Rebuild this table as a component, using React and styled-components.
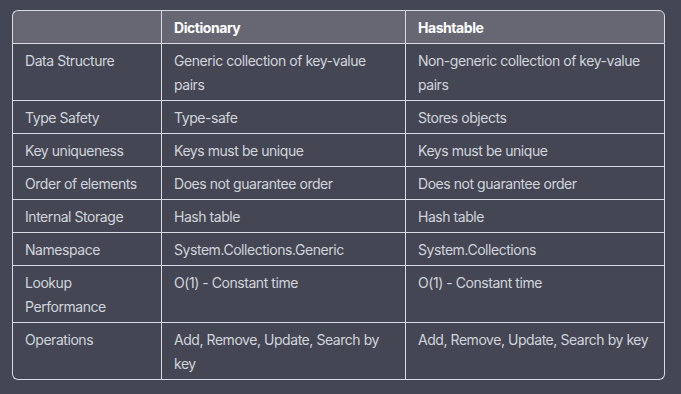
import React from "react";
import styled, { createGlobalStyle } from "styled-components";

const Global = createGlobalStyle`
  html, body { margin: 0; padding: 0; background: #444654; }
  body { font-family: Inter, "Liberation Sans", sans-serif; }
`;

const Page = styled.div`
  padding: 10px 12px;
  background: #444654;
  min-height: 394px;
  box-sizing: border-box;
`;

const Table = styled.table`
  border-collapse: separate;
  border-spacing: 0;
  table-layout: fixed;
  width: 653px;
  font-size: 14px;
  line-height: 24px;
  color: #d1d5db;
`;

const Cell = styled.td`
  box-sizing: border-box;
  padding: 5px 12px 3px;
  vertical-align: top;
  text-align: left;
  border-left: 1px solid #d9d9e3;
  border-bottom: 1px solid #d9d9e3;
  letter-spacing: -0.45px;
  &:last-child { border-right: 1px solid #d9d9e3; }
  tr:last-child > &:first-child { border-bottom-left-radius: 6px; }
  tr:last-child > &:last-child { border-bottom-right-radius: 6px; }
`;

const Head = styled.th`
  box-sizing: border-box;
  padding: 5px 12px 3px;
  text-align: left;
  font-weight: 700;
  color: #ffffff;
  background: #666773;
  border-left: 1px solid #d9d9e3;
  border-top: 1px solid #d9d9e3;
  border-bottom: 1px solid #d9d9e3;
  letter-spacing: -0.45px;
  &:first-child { border-top-left-radius: 6px; }
  &:last-child { border-right: 1px solid #d9d9e3; border-top-right-radius: 6px; }
`;

const rows = [
  ["Data Structure", "Generic collection of key-value pairs", "Non-generic collection of key-value pairs"],
  ["Type Safety", "Type-safe", "Stores objects"],
  ["Key uniqueness", "Keys must be unique", "Keys must be unique"],
  ["Order of elements", "Does not guarantee order", "Does not guarantee order"],
  ["Internal Storage", "Hash table", "Hash table"],
  ["Namespace", "System.Collections.Generic", "System.Collections"],
  ["Lookup Performance", "O(1) - Constant time", "O(1) - Constant time"],
  ["Operations", "Add, Remove, Update, Search by key", "Add, Remove, Update, Search by key"],
];

export default function App() {
  return (
    <Page>
      <Global />
      <Table>
        <colgroup>
          <col style={{ width: 149 }} />
          <col style={{ width: 244 }} />
          <col style={{ width: 260 }} />
        </colgroup>
        <thead>
          <tr>
            <Head></Head>
            <Head>Dictionary</Head>
            <Head>Hashtable</Head>
          </tr>
        </thead>
        <tbody>
          {rows.map((r) => (
            <tr key={r[0]}>
              {r.map((c, i) => (
                <Cell key={i}>{c}</Cell>
              ))}
            </tr>
          ))}
        </tbody>
      </Table>
    </Page>
  );
}
